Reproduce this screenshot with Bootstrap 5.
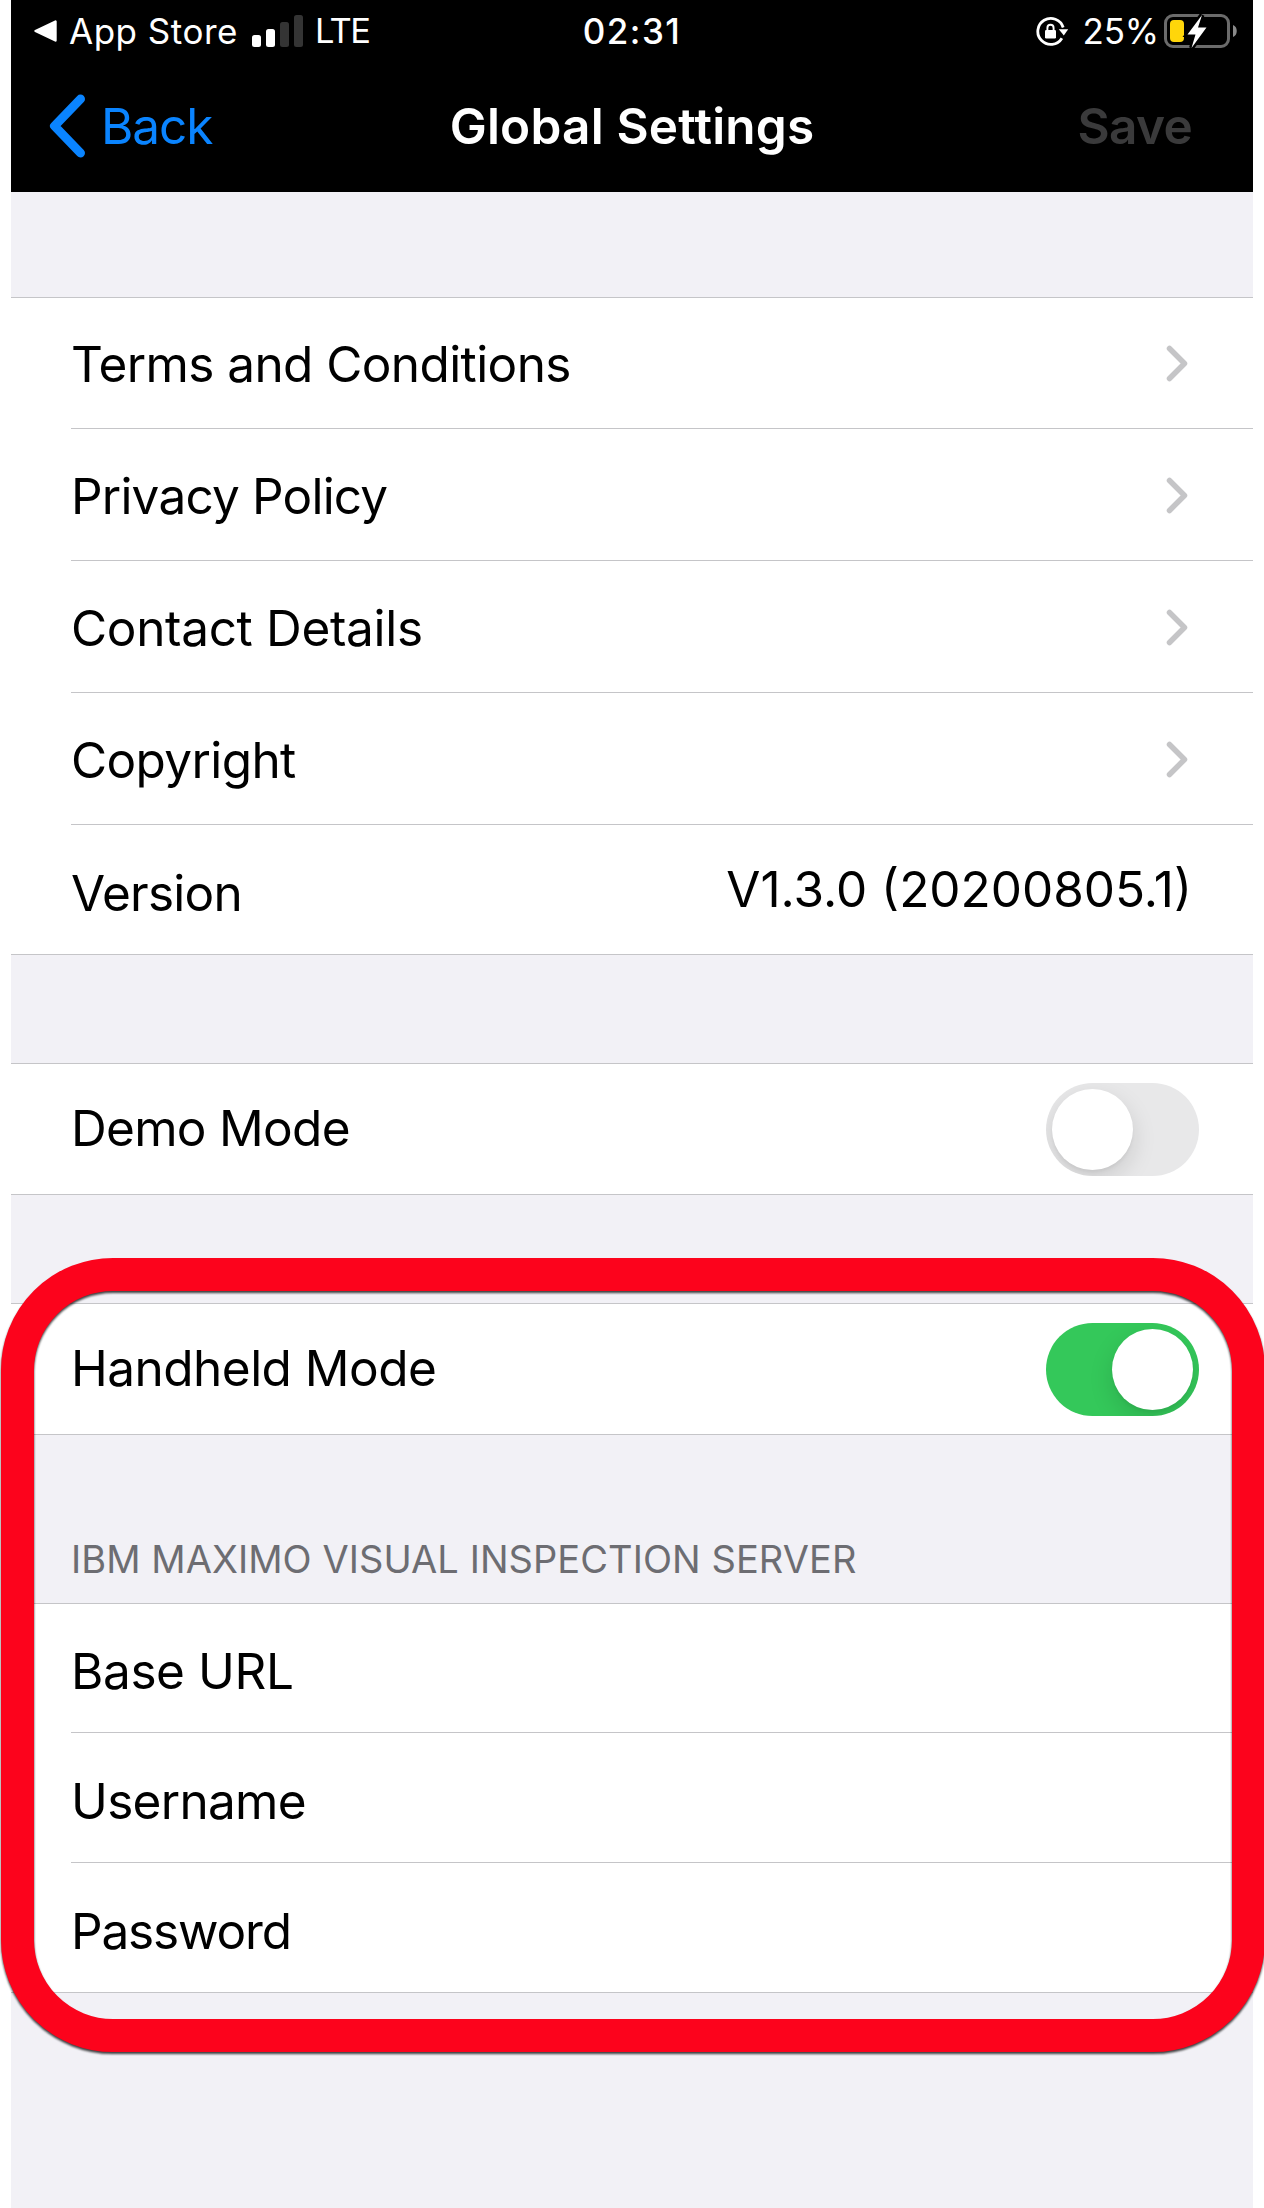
<!DOCTYPE html>
<html lang="en">
<head>
<meta charset="utf-8">
<meta name="viewport" content="width=device-width, initial-scale=1">
<title>Global Settings</title>
<link href="https://cdn.jsdelivr.net/npm/bootstrap@5.3.0/dist/css/bootstrap.min.css" rel="stylesheet">
<style>
  body { font-family: Inter, "Liberation Sans", sans-serif; font-size: 49.5px; line-height: 60px; color: #000; background: #fff; overflow: hidden; white-space: nowrap; }
  svg { display: block; flex: none; }
  .phone { width: 1242px; height: 2208px; margin: 0 auto; background: #f2f1f6; }
  .topbar { height: 192px; background: #000; color: #fff; }
  .status { height: 62px; font-size: 35px; line-height: 42px; }
  .thirds { display: grid; grid-template-columns: 1fr auto 1fr; align-items: center; }
  .status-left { padding-left: 23px; }
  .app-name { margin-left: 12px; letter-spacing: .5px; width: 183px; }
  .carrier { margin-left: 12px; letter-spacing: -1.6px; font-size: 34.5px; }
  .clock { font-weight: 500; letter-spacing: 1.5px; }
  .status-right { padding-right: 16px; }
  .percent { margin: 0 5px 0 13px; letter-spacing: -.16px; }
  .titlebar { height: 130px; padding-bottom: 2px; }
  .back-link { padding-left: 36px; color: #0a84ff; letter-spacing: -1.05px; gap: 15px; }
  .heading { font-weight: 600; letter-spacing: .2px; font-size: 49.5px; line-height: 60px; }
  .save { padding-right: 61px; font-weight: 600; letter-spacing: -.7px; color: #3a3a3b; }
  .panel { background: #fff; border: solid #c5c5c8; border-width: 1px 0; }
  .item { height: 132px; margin-left: 60px; padding: 2px 65px 0 0; border-bottom: 1px solid #c5c5c8; }
  .item:first-child { height: 131px; padding-top: 1px; }
  .item:last-child { border-bottom: 0; }
  .item.version { height: 129px; padding: 6px 61px 0 0; }
  .build { margin-top: -8px; }
  .item.toggle-item { height: 130px; padding: 0 54px 0 0; }
  .toggle-item > span:first-child { margin-top: -2px; }
  .item.field { height: 130px; padding-top: 6px; }
  .item.field:first-child { height: 129px; padding-top: 5px; }
  .item.field:last-child { height: 129px; }
  .toggle { width: 153px; height: 93px; padding: 6px; border-radius: 47px; background: #e8e8e9; display: flex; overflow: hidden; }
  .toggle::before { content: ""; width: 81px; height: 81px; border-radius: 50%; background: #fff; box-shadow: 0 9px 24px rgba(0,0,0,.13), 0 3px 3px rgba(0,0,0,.04); }
  .toggle.on { background: #34c85a; justify-content: flex-end; }
  .gap-top { height: 105px; }
  .gap-mid { height: 108px; }
  .section-label { height: 168px; padding: 101px 0 0 60px; font-size: 38px; line-height: 46px; color: #6d6d72; letter-spacing: .06px; }
  .callout-ring { position: absolute; left: 1px; top: 1258px; width: 1264px; height: 794px; border: 33px solid #fc031c; border-radius: 112px; filter: drop-shadow(0 2px 1px rgba(0,0,0,.75)); pointer-events: none; }
</style>
</head>
<body>
<main class="phone">
  <header class="topbar">
    <div class="status thirds">
      <div class="status-left d-flex align-items-center">
        <svg width="23" height="24" viewBox="0 0 23 24"><path d="M1.5 12 21.5 2.5v19z" fill="#fff" stroke="#fff" stroke-width="2.4" stroke-linejoin="round"/></svg>
        <span class="app-name">App Store</span>
        <svg width="51" height="34" viewBox="0 0 51 34"><g fill="#fff"><rect y="21" width="9" height="12" rx="2.5"/><rect x="14" y="15" width="9" height="18" rx="2.5"/></g><g fill="#343434"><rect x="28" y="8" width="9" height="25" rx="2.5"/><rect x="42" y="1" width="9" height="32" rx="2.5"/></g></svg>
        <span class="carrier">LTE</span>
      </div>
      <div class="clock">02:31</div>
      <div class="status-right d-flex align-items-center justify-content-end">
        <svg width="33" height="30" viewBox="0 0 33 30"><path d="M25.9 22.2A13 13 0 1 1 27.2 11.5" fill="none" stroke="#fff" stroke-width="2.8"/><path d="M22.8 13.2h9.4l-4.4 6.4z" fill="#fff"/><rect x="9" y="14" width="11" height="8.5" rx="1.2" fill="#fff"/><path d="M11.4 14.5v-2.6a3.1 3.1 0 0 1 6.2 0v2.6" fill="none" stroke="#fff" stroke-width="1.9"/></svg>
        <span class="percent">25%</span>
        <svg width="73" height="36" viewBox="0 0 73 36"><rect x="1.5" y="2.5" width="63" height="31" rx="7.5" fill="none" stroke="#6b6b6b" stroke-width="3"/><path d="M69 12c5 1.500 5 10.500 0 12z" fill="#8a8a8a"/><rect x="6" y="7" width="14" height="22" rx="4" fill="#ffd60a"/><path d="M38 2 23.500 21.500H31.500L27.500 35 42.500 14.500H34z" fill="#fff" stroke="#000" stroke-width="5" paint-order="stroke"/></svg>
      </div>
    </div>
    <div class="titlebar thirds">
      <a class="back-link d-flex align-items-center text-decoration-none" href="#">
        <svg width="39" height="64" viewBox="0 0 39 64"><path d="M33.500 5 7.500 32l26 27" fill="none" stroke="#0a84ff" stroke-width="9" stroke-linecap="round" stroke-linejoin="round"/></svg>
        <span>Back</span>
      </a>
      <h1 class="heading m-0">Global Settings</h1>
      <div class="save text-end">Save</div>
    </div>
  </header>

  <div class="gap-top"></div>
  <section class="panel">
    <div class="item d-flex align-items-center justify-content-between"><span style="letter-spacing:-.59px">Terms and Conditions</span><svg width="22" height="38" viewBox="0 0 22 38"><path d="M3.500 3.500 18.500 18.500 3.500 33.500" fill="none" stroke="#c5c5c7" stroke-width="5.500" stroke-linecap="round" stroke-linejoin="round"/></svg></div>
    <div class="item d-flex align-items-center justify-content-between"><span style="letter-spacing:-.8px">Privacy Policy</span><svg width="22" height="38" viewBox="0 0 22 38"><path d="M3.500 3.500 18.500 18.500 3.500 33.500" fill="none" stroke="#c5c5c7" stroke-width="5.500" stroke-linecap="round" stroke-linejoin="round"/></svg></div>
    <div class="item d-flex align-items-center justify-content-between"><span style="letter-spacing:-.33px">Contact Details</span><svg width="22" height="38" viewBox="0 0 22 38"><path d="M3.500 3.500 18.500 18.500 3.500 33.500" fill="none" stroke="#c5c5c7" stroke-width="5.500" stroke-linecap="round" stroke-linejoin="round"/></svg></div>
    <div class="item d-flex align-items-center justify-content-between"><span style="letter-spacing:-.62px">Copyright</span><svg width="22" height="38" viewBox="0 0 22 38"><path d="M3.500 3.500 18.500 18.500 3.500 33.500" fill="none" stroke="#c5c5c7" stroke-width="5.500" stroke-linecap="round" stroke-linejoin="round"/></svg></div>
    <div class="item version d-flex align-items-center justify-content-between"><span style="letter-spacing:-.75px">Version</span><span class="build">V1.3.0 (20200805.1)</span></div>
  </section>

  <div class="gap-mid"></div>
  <section class="panel">
    <div class="item toggle-item d-flex align-items-center justify-content-between"><span style="letter-spacing:-.7px">Demo Mode</span><span class="toggle" role="switch" aria-checked="false"></span></div>
  </section>

  <div class="gap-mid"></div>
  <section class="panel">
    <div class="item toggle-item d-flex align-items-center justify-content-between"><span style="letter-spacing:-.52px">Handheld Mode</span><span class="toggle on" role="switch" aria-checked="true"></span></div>
  </section>

  <div class="section-label">IBM MAXIMO VISUAL INSPECTION SERVER</div>
  <section class="panel">
    <div class="item field d-flex align-items-center"><span style="letter-spacing:-.4px">Base URL</span></div>
    <div class="item field d-flex align-items-center"><span style="letter-spacing:-.7px">Username</span></div>
    <div class="item field d-flex align-items-center"><span style="letter-spacing:-1.15px">Password</span></div>
  </section>
</main>
<div class="callout-ring"></div>
<script src="https://cdn.jsdelivr.net/npm/bootstrap@5.3.0/dist/js/bootstrap.bundle.min.js"></script>
</body>
</html>
